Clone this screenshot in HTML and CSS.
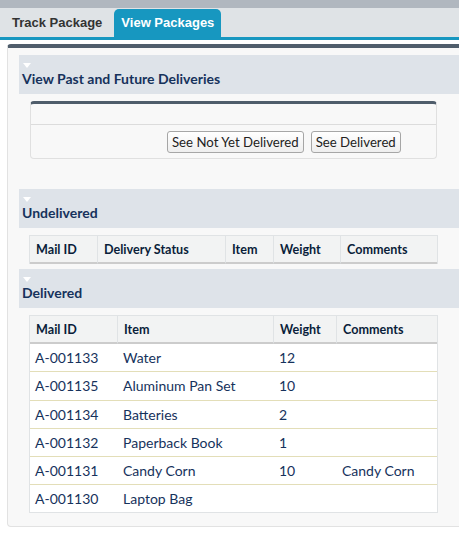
FILE: index.html
```html
<!DOCTYPE html>
<html>
<head>
<meta charset="utf-8">
<link rel="stylesheet" href="styles.css">
</head>
<body>
<div class="topbar"></div>
<div class="tabbar">
  <div class="tab">Track Package</div>
  <div class="tab active">View Packages</div>
</div>
<div class="panel">
  <div class="sect-head"><span class="tri"></span><h3>View Past and Future Deliveries</h3></div>
  <div class="block">
    <div class="block-top"></div>
    <div class="block-buttons">
      <button class="btn">See Not Yet Delivered</button>
      <button class="btn">See Delivered</button>
    </div>
  </div>
  <div class="sect-head spaced"><span class="tri"></span><h3>Undelivered</h3></div>
  <table class="list undelivered">
    <thead>
      <tr><th>Mail ID</th><th>Delivery Status</th><th>Item</th><th>Weight</th><th>Comments</th></tr>
    </thead>
  </table>
  <div class="sect-head tight"><span class="tri"></span><h3>Delivered</h3></div>
  <table class="list delivered">
    <thead>
      <tr><th>Mail ID</th><th>Item</th><th>Weight</th><th>Comments</th></tr>
    </thead>
    <tbody>
      <tr><td>A-001133</td><td>Water</td><td>12</td><td></td></tr>
      <tr><td>A-001135</td><td>Aluminum Pan Set</td><td>10</td><td></td></tr>
      <tr><td>A-001134</td><td>Batteries</td><td>2</td><td></td></tr>
      <tr><td>A-001132</td><td>Paperback Book</td><td>1</td><td></td></tr>
      <tr><td>A-001131</td><td>Candy Corn</td><td>10</td><td>Candy Corn</td></tr>
      <tr><td>A-001130</td><td>Laptop Bag</td><td></td><td></td></tr>
    </tbody>
  </table>
</div>
</body>
</html>
```
FILE: styles.css
```css
html, body {
  margin: 0;
  padding: 0;
  background: #ffffff;
}
body {
  font-family: Lato, "Open Sans", Arial, sans-serif;
  color: #16325c;
}
.topbar {
  height: 8px;
  background: #b0b7bf;
}
.tabbar {
  height: 29px;
  background: #dfe3e6;
  border-bottom: 3px solid #1797c0;
  display: flex;
  align-items: flex-end;
  padding-left: 5px;
  gap: 5px;
}
.tab {
  font-family: "Liberation Sans", Arial, sans-serif;
  font-weight: bold;
  font-size: 13px;
  color: #333333;
  height: 28px;
  line-height: 27px;
  padding: 0 7px;
  border-radius: 5px 5px 0 0;
}
.tab.active {
  background: #1797c0;
  color: #ffffff;
}
.panel {
  margin: 4px 0 0 7px;
  background: #f8f8f8;
  border-top: 4px solid #4f5d6b;
  border-left: 1px solid #e2e2e2;
  border-bottom: 1px solid #e2e2e2;
  border-radius: 4px 0 0 4px;
  padding: 7px 0 13px 11px;
}
.sect-head {
  background: #dee3e9;
  height: 39px;
  box-sizing: border-box;
  padding: 8px 0 0 3px;
}
.sect-head.spaced {
  margin-top: 30px;
}
.sect-head.tight {
  margin-top: 5px;
}
.tri {
  display: block;
  width: 0;
  height: 0;
  margin-left: 1px;
  border-left: 4px solid transparent;
  border-right: 4px solid transparent;
  border-top: 5px solid #ffffff;
  margin-bottom: 2px;
}
.sect-head h3 {
  margin: 0;
  font-size: 14px;
  line-height: 18px;
  font-weight: bold;
  color: #16325c;
}
.block {
  margin: 7px 0 0 11px;
  width: 407px;
  box-sizing: border-box;
  border-top: 3px solid #4f5d6b;
  border-left: 1px solid #e0e0e0;
  border-right: 1px solid #e0e0e0;
  border-bottom: 1px solid #e0e0e0;
  border-radius: 4px;
}
.block-top {
  height: 20px;
  border-bottom: 1px solid #dcdcdc;
}
.block-buttons {
  height: 33px;
  box-sizing: border-box;
  padding: 6px 0 0 136px;
  display: flex;
  gap: 7px;
  align-items: flex-start;
}
.btn {
  font-family: Lato, "Open Sans", Arial, sans-serif;
  font-size: 13.2px;
  color: #222222;
  height: 22px;
  padding: 0 4px;
  border: 1px solid #a6a6a6;
  border-radius: 3px;
  background: linear-gradient(#ffffff, #eeeeee);
  line-height: 20px;
}
.list {
  margin: 7px 0 0 10px;
  width: 409px;
  border-collapse: separate;
  border-spacing: 0;
  table-layout: fixed;
  background: #ffffff;
  border: 1px solid #e0e3e5;
}
.list th {
  background: #f2f3f3;
  font-size: 12.6px;
  font-weight: bold;
  color: #0a1e3a;
  text-align: left;
  height: 28px;
  padding: 0 6px;
  border-right: 1px solid #e0e3e5;
  border-bottom: 2px solid #cccccc;
  box-sizing: border-box;
}
.list th:last-child {
  border-right: none;
}
.list td {
  font-size: 14px;
  color: #16325c;
  height: 28.2px;
  padding: 0 5px;
  border-top: 1px solid #e3deb8;
  box-sizing: border-box;
}
.list tbody tr:first-child td {
  border-top: none;
  height: 27.4px;
}
.undelivered {
  border-bottom: none;
}
.undelivered th:nth-child(1) { width: 68px; }
.undelivered th:nth-child(2) { width: 128px; }
.undelivered th:nth-child(3) { width: 48px; }
.undelivered th:nth-child(4) { width: 67px; }
.delivered th:nth-child(1) { width: 88px; }
.delivered th:nth-child(2) { width: 156px; }
.delivered th:nth-child(3) { width: 63px; }
```
